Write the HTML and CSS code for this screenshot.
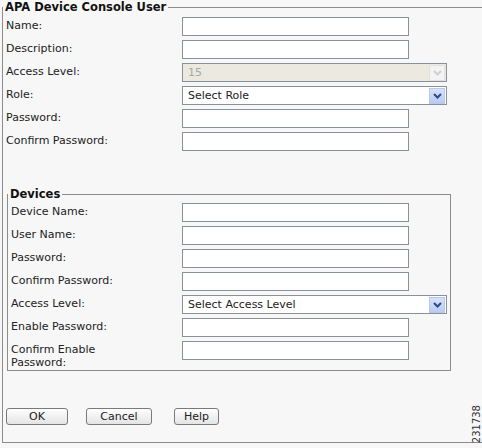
FILE: index.html
```html
<!DOCTYPE html>
<html lang="en">
<head>
    <meta charset="UTF-8">
    <title>APA Device Console User</title>
    <link rel="stylesheet" href="styles.css">
</head>
<body>
    <fieldset class="panel">
        <legend>APA Device Console User</legend>
        <div class="form-grid">
            <label>Name:</label>
            <input type="text">
            <label>Description:</label>
            <input type="text">
            <label>Access Level:</label>
            <div class="select disabled">
                <span class="select-text">15</span>
                <span class="arrow"><svg width="9" height="6" viewBox="0 0 9 6"><path d="M1 1 L4.5 4.5 L8 1" fill="none" stroke-width="2"/></svg></span>
            </div>
            <label>Role:</label>
            <div class="select">
                <span class="select-text">Select Role</span>
                <span class="arrow"><svg width="9" height="6" viewBox="0 0 9 6"><path d="M1 1 L4.5 4.5 L8 1" fill="none" stroke-width="2"/></svg></span>
            </div>
            <label>Password:</label>
            <input type="password">
            <label>Confirm Password:</label>
            <input type="password">
        </div>

        <fieldset class="devices">
            <legend>Devices</legend>
            <div class="form-grid devices-grid">
                <label>Device Name:</label>
                <input type="text">
                <label>User Name:</label>
                <input type="text">
                <label>Password:</label>
                <input type="password">
                <label>Confirm Password:</label>
                <input type="password">
                <label>Access Level:</label>
                <div class="select">
                    <span class="select-text">Select Access Level</span>
                    <span class="arrow"><svg width="9" height="6" viewBox="0 0 9 6"><path d="M1 1 L4.5 4.5 L8 1" fill="none" stroke-width="2"/></svg></span>
                </div>
                <label>Enable Password:</label>
                <input type="password">
                <label>Confirm Enable<br>Password:</label>
                <input type="password">
            </div>
        </fieldset>

        <div class="buttons">
            <button class="btn btn-ok">OK</button>
            <button class="btn btn-cancel">Cancel</button>
            <button class="btn btn-help">Help</button>
        </div>
    </fieldset>

    <div class="fig-id">231738</div>
</body>
</html>
```

FILE: styles.css
```css
body {
    margin: 0;
    width: 482px;
    height: 448px;
    overflow: hidden;
    position: relative;
    background-color: #f7f7f7;
    font-family: "DejaVu Sans", Verdana, sans-serif;
    font-size: 11px;
    color: #222;
}

fieldset {
    border: 1px solid #8c8c8c;
    padding: 0;
}
legend {
    padding: 0 2px;
    font-size: 11.5px;
    line-height: 14px;
    font-weight: bold;
    color: #111;
}

.panel {
    margin: 0 -20px 0 2px;
    padding-bottom: 17px;
}

.form-grid {
    display: grid;
    grid-template-columns: 176px auto;
    grid-auto-rows: minmax(19px, auto);
    row-gap: 4px;
    justify-items: start;
    margin: 3px 0 0 3px;
}
.form-grid label {
    line-height: 13px;
    padding-top: 2px;
}
.form-grid input {
    box-sizing: border-box;
    width: 227px;
    height: 19px;
    margin: 0;
    border: 1px solid #8a9099;
    background-color: #fff;
    font-family: inherit;
    font-size: 11px;
}

.select {
    box-sizing: border-box;
    display: flex;
    align-items: center;
    width: 265px;
    height: 19px;
    border: 1px solid #8a9099;
    background-color: #fff;
}
.select-text {
    flex: 1;
    padding-left: 5px;
    line-height: 13px;
}
.arrow {
    display: flex;
    align-items: center;
    justify-content: center;
    width: 14px;
    height: 14px;
    margin-right: 1px;
    border: 1px solid #b7c7ee;
    background: linear-gradient(#d6e1fb, #b9cbf5);
}
.arrow path {
    stroke: #2c4a86;
}
.select.disabled {
    background-color: #ebe9e0;
    color: #a7a7a7;
}
.select.disabled .arrow {
    border-color: #e2e2e2;
    background: #f3f3f3;
}
.select.disabled .arrow path {
    stroke: #cfcfcf;
}

.devices {
    width: 442px;
    margin: 36px 0 0 4px;
    padding-bottom: 1px;
}
.devices-grid {
    grid-template-columns: 171px auto;
    margin-top: 2px;
}

.buttons {
    display: flex;
    margin: 37px 0 0 3px;
}
.btn {
    box-sizing: border-box;
    height: 17px;
    padding: 0;
    border: 1px solid #7a7a7a;
    border-radius: 3px;
    background: linear-gradient(#fefefe, #e4e4e4);
    font-family: inherit;
    font-size: 11px;
    line-height: 13px;
    color: #222;
}
.btn-ok { width: 62px; }
.btn-cancel { width: 66px; margin-left: 18px; }
.btn-help { width: 45px; margin-left: 22px; }

.fig-id {
    position: absolute;
    left: 471px;
    top: 405px;
    writing-mode: vertical-rl;
    transform: rotate(180deg);
    font-size: 10px;
    line-height: 11px;
    color: #333;
}
```
